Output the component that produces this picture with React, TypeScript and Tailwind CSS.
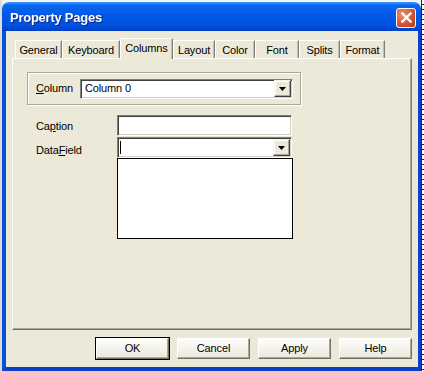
import React from "react";

const tabs = [
  { label: "General", w: "w-[47px]" },
  { label: "Keyboard", w: "w-[58px]" },
  { label: "Columns", w: "w-[53px]", sel: true },
  { label: "Layout", w: "w-[42px]" },
  { label: "Color", w: "w-[40px]" },
  { label: "Font", w: "w-[44px]" },
  { label: "Splits", w: "w-[41px]" },
  { label: "Format", w: "w-[45px]" },
];

function Arrow() {
  return (
    <svg width="7" height="4" viewBox="0 0 7 4">
      <path d="M0 0H7L3.5 4Z" fill="#000" />
    </svg>
  );
}

function DropBtn() {
  return (
    <div className="w-[17px] h-[17px] bg-[#ece9d8] border border-t-[#f4f2e8] border-l-[#f4f2e8] border-r-[#404040] border-b-[#404040] shadow-[inset_-1px_-1px_0_#aca899,inset_1px_1px_0_#ffffff] flex items-center justify-center">
      <Arrow />
    </div>
  );
}

const sunken =
  "border border-t-[#808080] border-l-[#808080] border-r-white border-b-white shadow-[inset_1px_1px_0_#404040,inset_-1px_-1px_0_#d4d0c8] bg-white";

function Btn({ label, def }: { label: string; def?: boolean }) {
  return (
    <div
      className={
        "w-[75px] h-[23px] flex items-center justify-center " +
        (def ? "border border-black" : "border border-transparent")
      }
    >
      <div className="w-full h-full flex items-center justify-center bg-gradient-to-b from-[#fdfdfb] to-[#ebe8dc] border border-t-white border-l-white border-r-[#716f64] border-b-[#716f64] shadow-[inset_-1px_-1px_0_#aca899]">
        {label}
      </div>
    </div>
  );
}

export default function App() {
  return (
    <div className="w-[424px] h-[371px] overflow-hidden flex bg-[#f4f4f4] font-['Liberation_Sans',Arial,sans-serif] text-[11px] text-black tracking-[-0.15px]">
      <div className="w-[2px] h-full bg-[#dcdcdc]" />
      <div className="w-[419px] mt-[2px] h-[369px] flex flex-col">
        {/* title bar */}
        <div className="h-[29px] rounded-t-[7px] bg-[linear-gradient(to_bottom,#3d95ff_0%,#0a66f0_12%,#0058e8_45%,#0052e0_80%,#003fc4_100%)] flex items-center pl-[8px] pr-[5px] shrink-0">
          <span className="text-white font-bold text-[13px] tracking-[-0.25px] drop-shadow-[1px_1px_0_#0b2a88] pt-[3px]">
            Property Pages
          </span>
          <div className="ml-auto mt-[2px] w-[20px] h-[20px] rounded-[3px] border border-white bg-[radial-gradient(circle_at_30%_30%,#f0906e,#d5502c_60%,#b83c17)] flex items-center justify-center">
            <svg width="11" height="11" viewBox="0 0 11 11">
              <path d="M1.5 1.5L9.5 9.5M9.5 1.5L1.5 9.5" stroke="#fff" strokeWidth="2.4" strokeLinecap="square" />
            </svg>
          </div>
        </div>
        {/* body with frame */}
        <div className="flex-1 bg-[#ece9d8] border-l-[4px] border-r-[3px] border-b-[4px] border-l-[#0a4fd8] border-r-[#0a3fc8] border-b-[#0a3fc8] flex flex-col">
          {/* tabs */}
          <div className="flex items-end ml-[9px] mt-[7px] h-[20px] relative z-10">
            {tabs.map((t) => (
              <div
                key={t.label}
                className={
                  t.w +
                  " flex items-center justify-center border-t border-l border-t-white border-l-white border-r border-r-[#808080] shadow-[inset_-1px_0_0_#c0beb3] bg-[#ece9d8] " +
                  (t.sel ? "h-[21px] -mb-px pb-[1px]" : "h-[18px] pt-[1px]")
                }
              >
                {t.label}
              </div>
            ))}
          </div>
          {/* panel */}
          <div className="ml-[6px] w-[400px] h-[272px] border border-t-white border-l-white border-r-[#808080] border-b-[#716f64] shadow-[inset_-1px_-1px_0_#aca899] bg-[#ece9d8] flex flex-col">
            <div className="ml-[14px] mt-[13px] w-[274px] h-[33px] border border-[#aca899] shadow-[inset_1px_1px_0_#ffffff,1px_1px_0_#ffffff] flex items-center pl-[8px]">
              <span className="w-[44px]">
                <span className="underline underline-offset-[1px]">C</span>olumn
              </span>
              <div className={sunken + " w-[213px] h-[20px] flex items-center pl-[4px] pr-[1px]"}>
                <span className="flex-1">Column 0</span>
                <DropBtn />
              </div>
            </div>
            <div className="ml-[23px] mt-[10px] flex">
              <div className="w-[81px] flex flex-col">
                <div className="h-[21px] flex items-center pt-[1px]">
                  Ca<span className="underline underline-offset-[1px]">p</span>tion
                </div>
                <div className="h-[23px] mt-[3px] flex items-center">
                  Data<span className="underline underline-offset-[1px]">F</span>ield
                </div>
              </div>
              <div className="flex flex-col w-[176px]">
                <div className={sunken + " w-[175px] h-[21px]"} />
                <div className={sunken + " w-[175px] h-[21px] mt-[1px] flex items-center pl-[2px] pr-[1px]"}>
                  <div className="w-px h-[13px] bg-black" />
                  <div className="flex-1" />
                  <DropBtn />
                </div>
                <div className="w-[176px] h-[81px] border border-black bg-white" />
              </div>
            </div>
          </div>
          {/* buttons */}
          <div className="mt-[7px] flex justify-end gap-[6px] pr-[5px]">
            <Btn label="OK" def />
            <Btn label="Cancel" />
            <Btn label="Apply" />
            <Btn label="Help" />
          </div>
        </div>
      </div>
      <div className="w-[3px] h-full bg-[repeating-linear-gradient(to_bottom,#ffffff_0px,#ffffff_4px,#0a246a_4px,#0a246a_5px)] border-l border-l-[#0a246a]" />
    </div>
  );
}
